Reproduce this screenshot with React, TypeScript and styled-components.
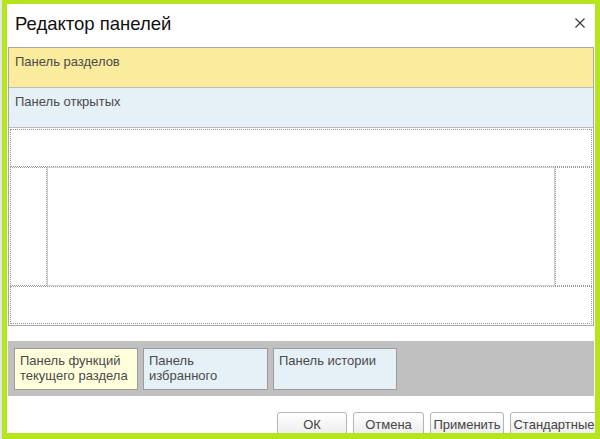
import React from "react";
import styled, { createGlobalStyle } from "styled-components";

const Global = createGlobalStyle`
  html, body { margin: 0; padding: 0; }
  body { font-family: Arial, "Liberation Sans", sans-serif; background: #b5e61d; }
`;

const Page = styled.div`
  width: 600px;
  height: 439px;
  box-sizing: border-box;
  display: flex;
  background: #b5e61d;
  padding: 4px 5px 6px 0;
  overflow: hidden;
`;

const EdgeStrip = styled.div`
  width: 2px;
  margin: -4px 5px -6px 0;
  background: #e4e6ea;
`;

const Dialog = styled.div`
  flex: 1;
  background: #ffffff;
  display: flex;
  flex-direction: column;
  overflow: hidden;
  padding: 0 1px;
`;

const Header = styled.div`
  height: 43px;
  display: flex;
  align-items: center;
  justify-content: space-between;
  padding: 0 9px 0 7px;
  flex-shrink: 0;
`;

const Title = styled.div`
  font-size: 18.5px;
  color: #111;
  margin-top: -3px;
`;

const Close = styled.div`
  width: 10px;
  height: 10px;
  display: flex;
  margin-top: -5px;
`;

const Frame = styled.div`
  border: 1px solid #a8a8a8;
  display: flex;
  flex-direction: column;
  height: 279px;
  box-sizing: border-box;
  flex-shrink: 0;
`;

const Band = styled.div<{ $bg: string }>`
  height: 40px;
  box-sizing: border-box;
  background: ${(p) => p.$bg};
  border-bottom: 1px solid #bcbcbc;
  padding: 6px 0 0 6px;
  font-size: 13px;
  color: #4a4a4a;
`;

const Layout = styled.div`
  flex: 1;
  display: flex;
  flex-direction: column;
  padding: 1px;
`;

const DotBox = styled.div<{ $h?: number }>`
  border: 1px dotted #9a9a9a;
  box-sizing: border-box;
  ${(p) => (p.$h ? `height: ${p.$h}px;` : "flex: 1;")}
`;

const MiddleRow = styled.div`
  display: flex;
  height: 119px;
`;

const SideBox = styled.div`
  width: 37px;
  border: 1px dotted #9a9a9a;
  box-sizing: border-box;
`;

const CenterBox = styled.div`
  flex: 1;
  border: 1px solid #cfcfcf;
  box-sizing: border-box;
`;

const Tray = styled.div`
  margin-top: 15px;
  height: 55px;
  background: #c0c0c0;
  display: flex;
  gap: 5px;
  padding: 7px 6px;
  box-sizing: border-box;
  flex-shrink: 0;
`;

const TrayPanel = styled.div<{ $bg: string; $w: number }>`
  width: ${(p) => p.$w}px;
  height: 42px;
  box-sizing: border-box;
  background: ${(p) => p.$bg};
  border: 1px solid #9c9c9c;
  padding: 4px 0 0 5px;
  font-size: 13px;
  line-height: 15px;
  color: #4a4a4a;
`;

const Buttons = styled.div`
  margin-top: 16px;
  display: flex;
  gap: 6px;
  padding-left: 269px;
  flex-shrink: 0;
  white-space: nowrap;
`;

const Button = styled.div<{ $w: number }>`
  width: ${(p) => p.$w}px;
  flex-shrink: 0;
  height: 24px;
  box-sizing: border-box;
  border: 1px solid #b4b4b4;
  border-radius: 3px;
  background: linear-gradient(#ffffff, #ececec);
  font-size: 13px;
  color: #444;
  display: flex;
  justify-content: center;
  padding-top: 4px;
`;

export default function App() {
  return (
    <>
      <Global />
      <Page>
        <EdgeStrip />
        <Dialog>
          <Header>
            <Title>Редактор панелей</Title>
            <Close>
              <svg width="10" height="10" viewBox="0 0 10 10">
                <path d="M0.5 0.5L9.5 9.5M9.5 0.5L0.5 9.5" stroke="#3a3a3a" strokeWidth="1.2" />
              </svg>
            </Close>
          </Header>
          <Frame>
            <Band $bg="#fbeb9d">Панель разделов</Band>
            <Band $bg="#e6f1f7">Панель открытых</Band>
            <Layout>
              <DotBox $h={38} />
              <MiddleRow>
                <SideBox />
                <CenterBox />
                <SideBox />
              </MiddleRow>
              <DotBox />
            </Layout>
          </Frame>
          <Tray>
            <TrayPanel $bg="#ffffdc" $w={124}>
              Панель функций
              <br />
              текущего раздела
            </TrayPanel>
            <TrayPanel $bg="#e6f1f7" $w={125}>
              Панель
              <br />
              избранного
            </TrayPanel>
            <TrayPanel $bg="#e6f1f7" $w={124}>
              Панель истории
            </TrayPanel>
          </Tray>
          <Buttons>
            <Button $w={70}>ОК</Button>
            <Button $w={71}>Отмена</Button>
            <Button $w={74}>Применить</Button>
            <Button $w={88}>Стандартные</Button>
          </Buttons>
        </Dialog>
      </Page>
    </>
  );
}
